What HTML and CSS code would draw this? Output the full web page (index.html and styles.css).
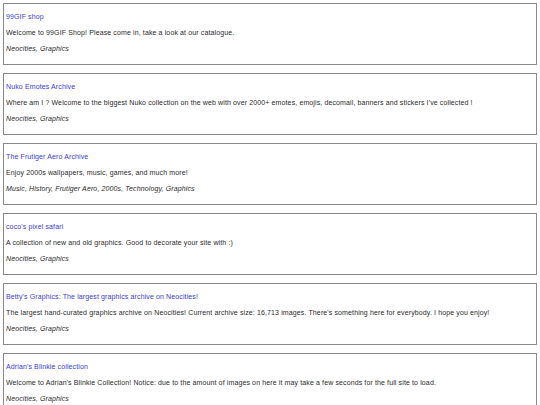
FILE: index.html
```html
<!DOCTYPE html>
<html lang="en">
<head>
    <meta charset="UTF-8">
    <title>Graphics Sites</title>
    <link rel="stylesheet" href="styles.css">
</head>
<body>

<div class="site">
    <a class="site-title" href="#">99GIF shop</a>
    <p class="site-desc">Welcome to 99GIF Shop! Please come in, take a look at our catalogue.</p>
    <p class="site-tags">Neocities, Graphics</p>
</div>

<div class="site">
    <a class="site-title" href="#">Nuko Emotes Archive</a>
    <p class="site-desc">Where am I ? Welcome to the biggest Nuko collection on the web with over 2000+ emotes, emojis, decomail, banners and stickers I've collected !</p>
    <p class="site-tags">Neocities, Graphics</p>
</div>

<div class="site">
    <a class="site-title" href="#">The Frutiger Aero Archive</a>
    <p class="site-desc">Enjoy 2000s wallpapers, music, games, and much more!</p>
    <p class="site-tags">Music, History, Frutiger Aero, 2000s, Technology, Graphics</p>
</div>

<div class="site">
    <a class="site-title" href="#">coco's pixel safari</a>
    <p class="site-desc">A collection of new and old graphics. Good to decorate your site with :)</p>
    <p class="site-tags">Neocities, Graphics</p>
</div>

<div class="site">
    <a class="site-title" href="#">Betty's Graphics: The largest graphics archive on Neocities!</a>
    <p class="site-desc">The largest hand-curated graphics archive on Neocities! Current archive size: 16,713 images. There's something here for everybody. I hope you enjoy!</p>
    <p class="site-tags">Neocities, Graphics</p>
</div>

<div class="site">
    <a class="site-title" href="#">Adrian's Blinkie collection</a>
    <p class="site-desc">Welcome to Adrian's Blinkie Collection! Notice: due to the amount of images on here it may take a few seconds for the full site to load.</p>
    <p class="site-tags">Neocities, Graphics</p>
</div>

</body>
</html>
```

FILE: styles.css
```css
body {
    font-family: "Liberation Sans", Arial, sans-serif;
    font-size: 7px;
    letter-spacing: 0.12px;
    color: #2a2a2a;
    margin: 3px;
    background: #fff;
}
.site {
    border: 1px solid #888;
    padding: 5px 2px 7px 2px;
    margin-bottom: 8px;
}
.site-title, .site-desc, .site-tags {
    display: block;
    margin: 0;
    line-height: 16px;
}
.site-title {
    color: #3b3bd6;
    text-decoration: none;
}
.site-tags {
    font-style: italic;
}
```
